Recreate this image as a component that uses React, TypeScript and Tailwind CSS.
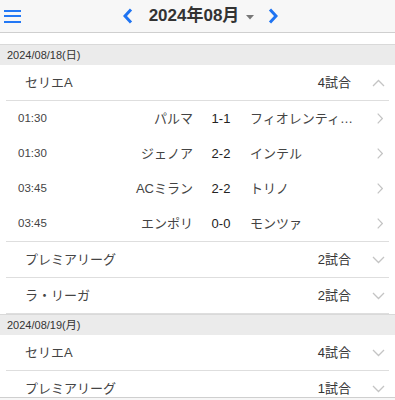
import React from 'react';

type Match = { time: string; home: string; score: string; away: string };
type League = { name: string; count: string; open?: boolean; matches?: Match[] };
type Day = { date: string; leagues: League[] };

const DAYS: Day[] = [
  {
    date: '2024/08/18(日)',
    leagues: [
      {
        name: 'セリエA',
        count: '4試合',
        open: true,
        matches: [
          { time: '01:30', home: 'パルマ', score: '1-1', away: 'フィオレンティーナ' },
          { time: '01:30', home: 'ジェノア', score: '2-2', away: 'インテル' },
          { time: '03:45', home: 'ACミラン', score: '2-2', away: 'トリノ' },
          { time: '03:45', home: 'エンポリ', score: '0-0', away: 'モンツァ' },
        ],
      },
      { name: 'プレミアリーグ', count: '2試合' },
      { name: 'ラ・リーガ', count: '2試合' },
    ],
  },
  {
    date: '2024/08/19(月)',
    leagues: [
      { name: 'セリエA', count: '4試合' },
      { name: 'プレミアリーグ', count: '1試合' },
    ],
  },
];

const Chevron = ({ dir, className }: { dir: 'up' | 'down'; className?: string }) => (
  <svg width="13" height="8" viewBox="0 0 13 8" className={className}>
    <path
      d={dir === 'up' ? 'M1 7 L6.5 1.5 L12 7' : 'M1 1 L6.5 6.5 L12 1'}
      fill="none"
      stroke="#c4c4c4"
      strokeWidth="1.3"
    />
  </svg>
);

const MatchRow = ({ m }: { m: Match }) => (
  <div className="flex items-center h-[35px] pl-[12px] pr-[6px]">
    <span className="w-[60px] text-[11.5px] text-[#444]">{m.time}</span>
    <span className="w-[115px] text-right text-[13px] text-[#444]">{m.home}</span>
    <span className="w-[56px] text-center text-[13px] text-[#222]">{m.score}</span>
    <span className="w-[108px] pl-[1px] text-[13px] text-[#444] truncate">{m.away}</span>
    <svg width="6" height="11" viewBox="0 0 6 11" className="ml-auto">
      <path d="M0.7 0.7 L5.3 5.5 L0.7 10.3" fill="none" stroke="#c4c4c4" strokeWidth="1.2" />
    </svg>
  </div>
);

export default function App() {
  return (
    <div
      className="w-[395px] h-[400px] overflow-hidden bg-white"
      style={{ fontFamily: '"Liberation Sans", "Noto Sans CJK JP", sans-serif' }}
    >
      {/* Header */}
      <div className="flex items-center h-[33px] bg-[#f7f7f7] border-b border-[#cfcfcf]">
        <div className="w-[30px] pl-[4px] flex flex-col gap-[3.5px]">
          <span className="block w-[17px] h-[2px] bg-[#2378f5]" />
          <span className="block w-[17px] h-[2px] bg-[#2378f5]" />
          <span className="block w-[17px] h-[2px] bg-[#2378f5]" />
        </div>
        <div className="flex-1 flex items-center justify-center">
          <svg width="10" height="16" viewBox="0 0 10 16">
            <path d="M8 1.5 L2 8 L8 14.5" fill="none" stroke="#1f74f2" strokeWidth="3" />
          </svg>
          <span className="ml-[16px] text-[17px] font-bold text-[#333]">2024年08月</span>
          <svg width="8" height="5" viewBox="0 0 8 5" className="ml-[7px] mt-[2px]">
            <path d="M0 0 L8 0 L4 4.5 Z" fill="#777" />
          </svg>
          <svg width="10" height="16" viewBox="0 0 10 16" className="ml-[14px]">
            <path d="M2 1.5 L8 8 L2 14.5" fill="none" stroke="#1f74f2" strokeWidth="3" />
          </svg>
        </div>
        <div className="w-[24px]" />
      </div>

      <div className="h-[11px]" />

      {DAYS.map((day) => (
        <div key={day.date}>
          <div className="h-[21px] flex items-center border-t border-[#d9d9d9] bg-[#ebebeb] pl-[7px] text-[11px] text-[#333]">
            {day.date}
          </div>
          <div className="mx-[6px]">
            {day.leagues.map((lg, i) => (
              <div key={lg.name + i} className="border-b border-[#dedede]">
                <div className="flex items-center h-[35px] pl-[19px] pr-[4px]">
                  <span className="text-[13px] text-[#444]">{lg.name}</span>
                  <span className="ml-auto text-[13px] text-[#333]">{lg.count}</span>
                  <Chevron dir={lg.open ? 'up' : 'down'} className="ml-[21px]" />
                </div>
                {lg.open && lg.matches && (
                  <div className="border-t border-[#dedede]">
                    {lg.matches.map((m, j) => (
                      <MatchRow key={j} m={m} />
                    ))}
                  </div>
                )}
              </div>
            ))}
          </div>
        </div>
      ))}

      <div className="fixed bottom-0 left-0 w-[395px] h-[3px] bg-[#f7f7f7] border-t border-[#cfcfcf]" />
    </div>
  );
}
